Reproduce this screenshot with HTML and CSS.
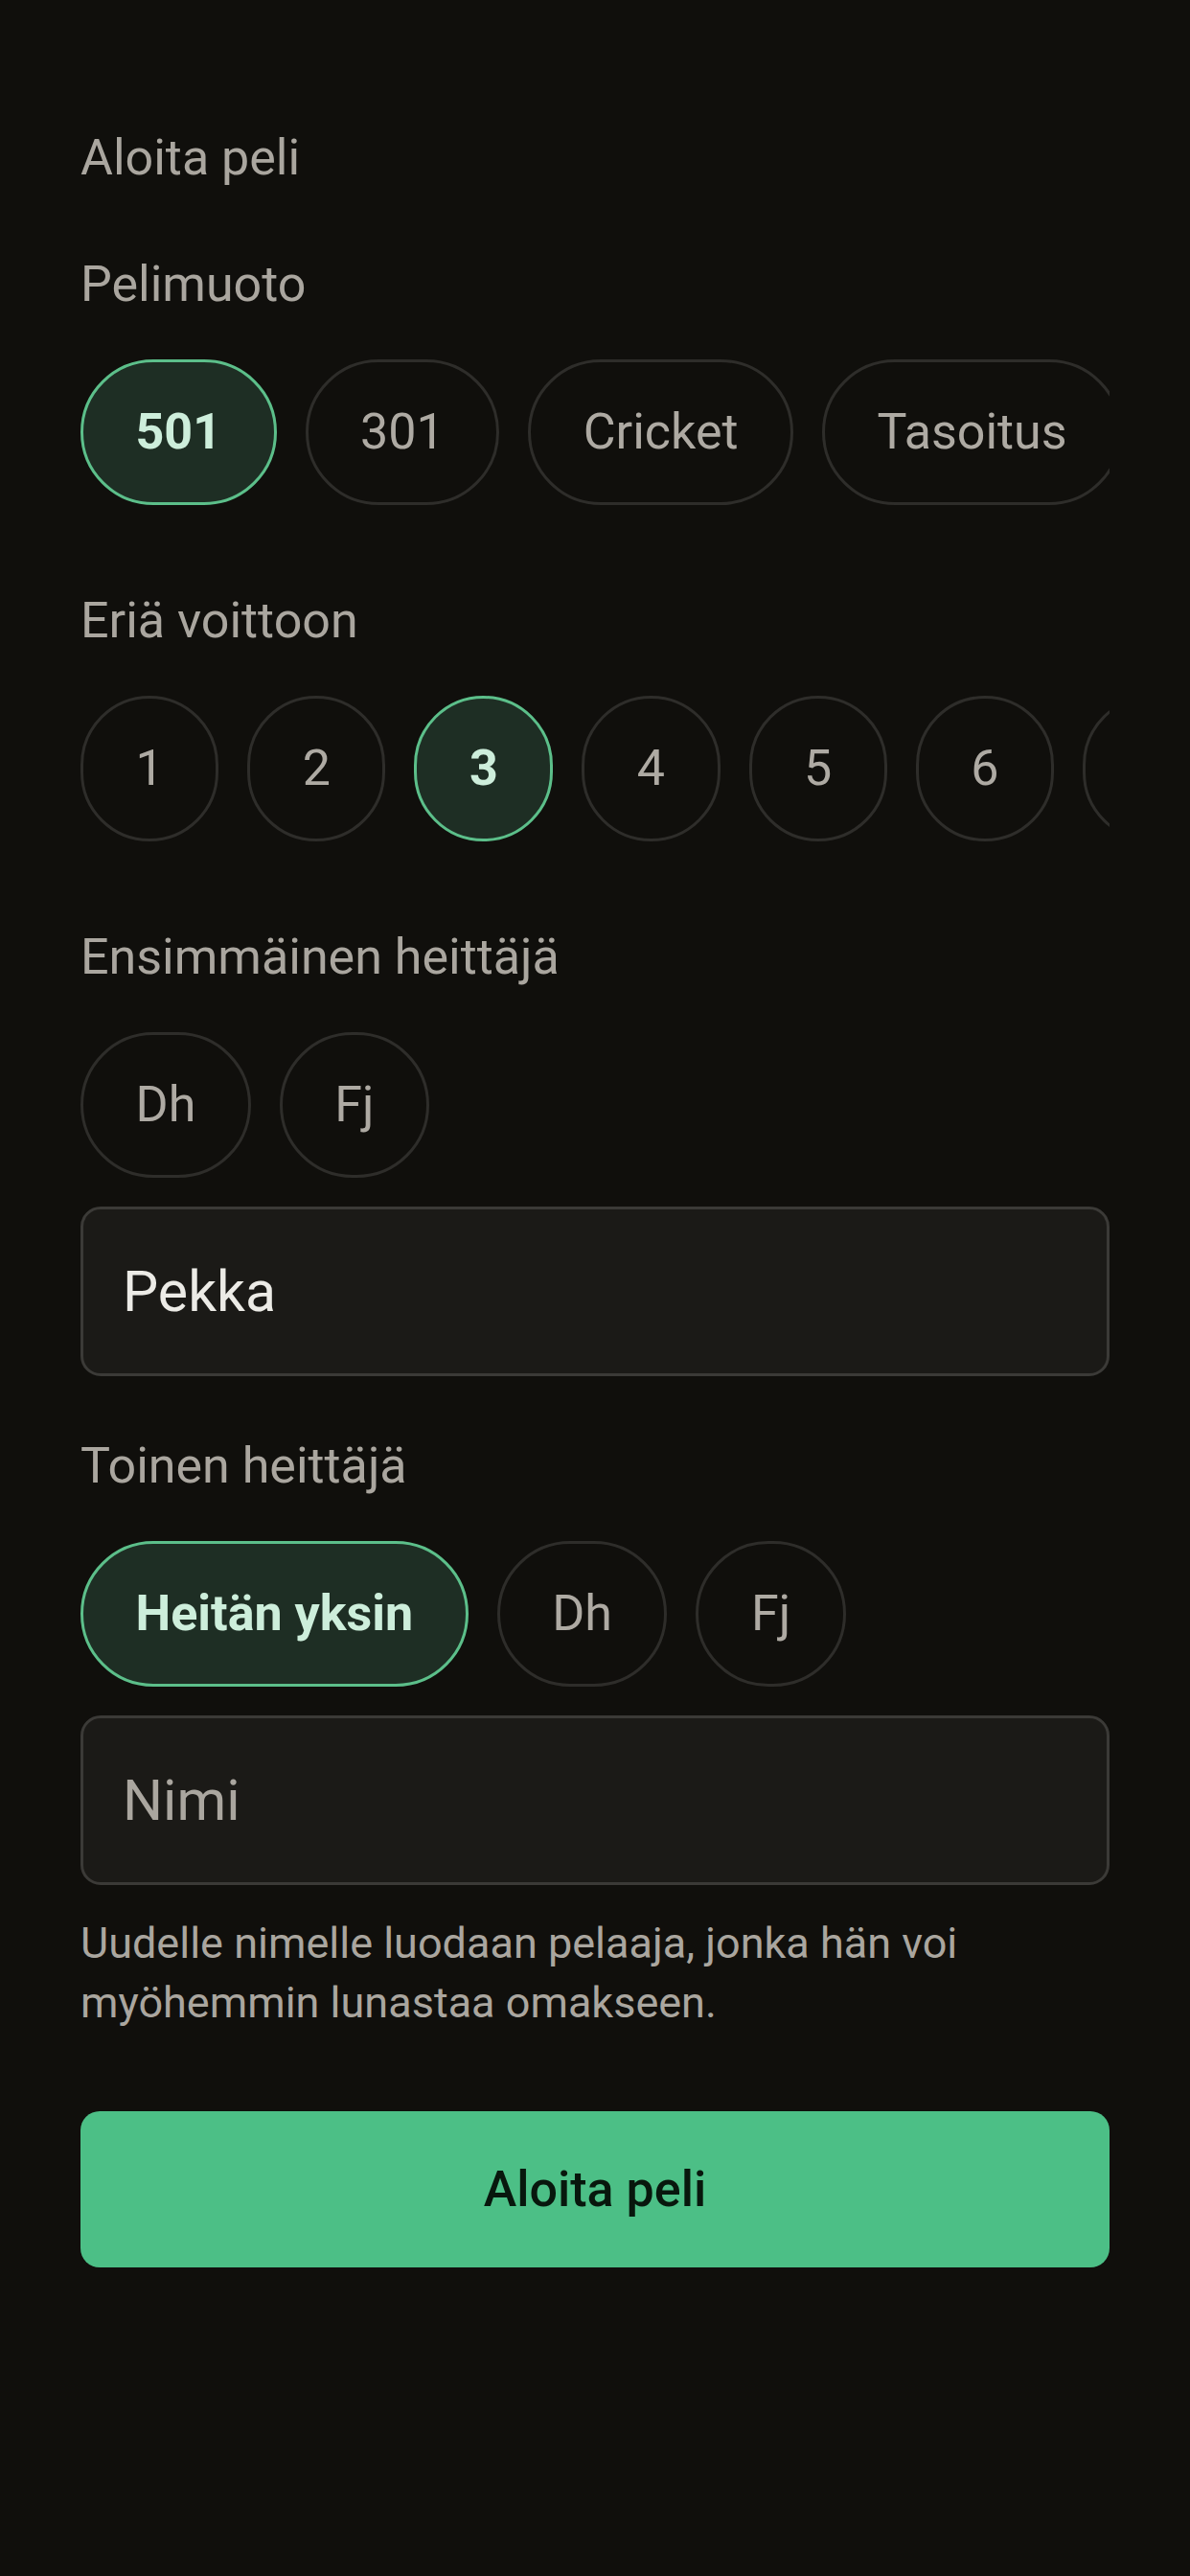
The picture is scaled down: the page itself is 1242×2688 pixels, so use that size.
FILE: index.html
```html
<!DOCTYPE html>
<html lang="fi">
<head>
<meta charset="utf-8">
<title>Aloita peli</title>
<link rel="stylesheet" href="styles.css">
</head>
<body>
<main class="page">
  <h1 class="title">Aloita peli</h1>

  <section class="section">
    <h2 class="label">Pelimuoto</h2>
    <div class="chips">
      <button class="chip active">501</button>
      <button class="chip">301</button>
      <button class="chip">Cricket</button>
      <button class="chip">Tasoitus</button>
    </div>
  </section>

  <section class="section">
    <h2 class="label">Eriä voittoon</h2>
    <div class="chips">
      <button class="chip">1</button>
      <button class="chip">2</button>
      <button class="chip active">3</button>
      <button class="chip">4</button>
      <button class="chip">5</button>
      <button class="chip">6</button>
      <button class="chip">7</button>
    </div>
  </section>

  <section class="section">
    <h2 class="label">Ensimmäinen heittäjä</h2>
    <div class="chips">
      <button class="chip">Dh</button>
      <button class="chip">Fj</button>
    </div>
    <div class="field"><span class="value">Pekka</span></div>
  </section>

  <section class="section second">
    <h2 class="label">Toinen heittäjä</h2>
    <div class="chips">
      <button class="chip active">Heitän yksin</button>
      <button class="chip">Dh</button>
      <button class="chip">Fj</button>
    </div>
    <div class="field"><span class="placeholder">Nimi</span></div>
    <p class="help">Uudelle nimelle luodaan pelaaja, jonka hän voi myöhemmin lunastaa omakseen.</p>
  </section>

  <button class="start">Aloita peli</button>
</main>
</body>
</html>
```

FILE: styles.css
```css
* { box-sizing: border-box; }
html, body {
  margin: 0;
  padding: 0;
  background: #100f0c;
}
body {
  font-family: Roboto, "Noto Sans", "Liberation Sans", sans-serif;
  color: #aaa69f;
  min-height: 2688px;
}
.page {
  padding: 135px 84px 0 84px;
  display: flex;
  flex-direction: column;
}
.title {
  margin: 0;
  font-size: 52px;
  font-weight: 400;
  line-height: 60px;
  color: #aaa69f;
}
.section {
  display: flex;
  flex-direction: column;
  margin-top: 72px;
}
.section + .section { margin-top: 91px; }
.section.second { margin-top: 64px; }
.label {
  margin: 0 0 48px 0;
  font-size: 52px;
  font-weight: 400;
  line-height: 60px;
  color: #aaa69f;
}
.chips {
  display: flex;
  gap: 30px;
  overflow: hidden;
  width: 100%;
}
.chip {
  flex: 0 0 auto;
  height: 152px;
  padding: 0 54.5px;
  border: 3px solid #2e2d2a;
  border-radius: 999px;
  background: transparent;
  color: #aeaaa3;
  font-family: inherit;
  font-size: 52px;
  font-weight: 400;
  line-height: 1;
  display: flex;
  align-items: center;
  justify-content: center;
}
.chip.active {
  background: #1e2e24;
  border-color: #5cbf8a;
  color: #cdeedb;
  font-weight: 700;
}
.field {
  margin-top: 30px;
  height: 177px;
  border: 3px solid #3b3a37;
  border-radius: 21px;
  background: #1b1a17;
  display: flex;
  align-items: center;
  padding: 0 41px;
  font-size: 59px;
}
.value { color: #ecebe6; }
.placeholder { color: #aaa69f; }
.help {
  margin: 30px 0 0 0;
  font-size: 45px;
  line-height: 62px;
  color: #aaa69f;
}
.start {
  margin-top: 82px;
  height: 163px;
  width: 100%;
  border: none;
  border-radius: 20px;
  background: #4cbf86;
  color: #08170d;
  font-family: inherit;
  font-size: 52px;
  font-weight: 500;
}
```
